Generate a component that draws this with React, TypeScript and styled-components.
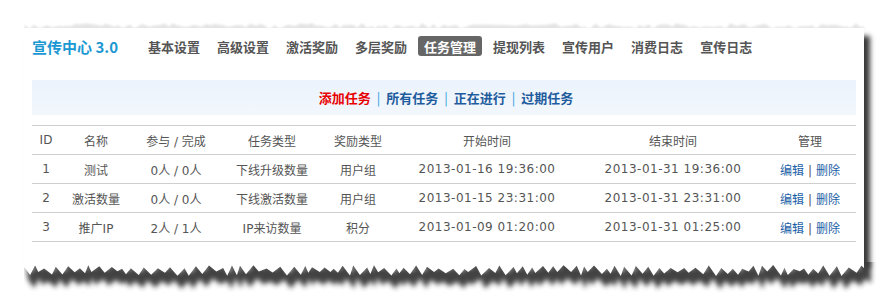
import React from "react";
import styled, { createGlobalStyle } from "styled-components";

const GlobalStyle = createGlobalStyle`
  html, body {
    margin: 0;
    padding: 0;
    background: #fff;
  }
  body {
    font-family: "DejaVu Sans", "Noto Sans CJK SC", sans-serif;
    color: #555;
  }
`;

const Page = styled.div`
  width: 882px;
  height: 302px;
  overflow: hidden;
  padding: 22px 0 0 24px;
  box-sizing: border-box;
`;

const Sheet = styled.div`
  width: 840px;
  box-sizing: border-box;
  padding: 6px 8px 20px;
  background: #fff;
  box-shadow: 6px 6px 5px rgba(0, 0, 0, 0.78);
`;

const Header = styled.div`
  display: flex;
  align-items: center;
  height: 20px;
`;

const Brand = styled.div`
  font-family: "Noto Sans CJK SC", sans-serif;
  font-size: 15px;
  font-weight: 700;
  color: #1b98d3;
  width: 110px;
  white-space: nowrap;
`;

const Nav = styled.div`
  display: flex;
  gap: 5px;
`;

const NavItem = styled.a<{ $active?: boolean }>`
  display: flex;
  align-items: center;
  height: 20px;
  padding: 0 6px;
  border-radius: 3px;
  font-family: "Noto Sans CJK SC", sans-serif;
  font-size: 13px;
  font-weight: 700;
  color: ${(p) => (p.$active ? "#fff" : "#555")};
  background: ${(p) => (p.$active ? "#666" : "transparent")};
  text-decoration: none;
  white-space: nowrap;
`;

const SubNav = styled.div`
  margin-top: 24px;
  height: 35px;
  display: flex;
  align-items: center;
  justify-content: center;
  padding-left: 4px;
  background: linear-gradient(#ebf3fc, #f2f7fc);
  font-family: "Noto Sans CJK SC", sans-serif;
  font-size: 13px;
  font-weight: 700;
`;

const SubLink = styled.a<{ $current?: boolean }>`
  color: ${(p) => (p.$current ? "#e80000" : "#1f5c9e")};
  text-decoration: none;
`;

const Sep = styled.span`
  color: #2a9be0;
  font-weight: 400;
  margin: 0 6px;
`;

const Table = styled.table`
  margin-top: 10px;
  width: 100%;
  border-collapse: collapse;
  table-layout: fixed;
  border-top: 1px solid #cfcfcf;
  font-size: 12px;
`;

const Th = styled.th`
  height: 28px;
  padding: 0;
  font-weight: 400;
  color: #555;
  text-align: center;
  border-bottom: 1px solid #cfcfcf;
`;

const Td = styled.td`
  height: 28px;
  padding: 0;
  color: #555;
  text-align: center;
  border-bottom: 1px solid #cfcfcf;
  white-space: nowrap;
`;

const Num = styled.span`
  letter-spacing: 0.5px;
`;

const ActionLink = styled.a`
  color: #1d5fa8;
  text-decoration: none;
`;

const ActionSep = styled.span`
  color: #555;
  margin: 0 4px;
`;

const EdgeSvg = styled.svg`
  display: block;
`;

const navItems = [
  "基本设置",
  "高级设置",
  "激活奖励",
  "多层奖励",
  "任务管理",
  "提现列表",
  "宣传用户",
  "消费日志",
  "宣传日志",
];

const subLinks = ["添加任务", "所有任务", "正在进行", "过期任务"];

const columns = [
  { title: "ID", width: 28 },
  { title: "名称", width: 72 },
  { title: "参与 / 完成", width: 88 },
  { title: "任务类型", width: 104 },
  { title: "奖励类型", width: 68 },
  { title: "开始时间", width: 190 },
  { title: "结束时间", width: 182 },
  { title: "管理", width: 92 },
];

const tasks = [
  { id: 1, name: "测试", count: "0人 / 0人", type: "下线升级数量", reward: "用户组", start: "2013-01-16 19:36:00", end: "2013-01-31 19:36:00" },
  { id: 2, name: "激活数量", count: "0人 / 0人", type: "下线激活数量", reward: "用户组", start: "2013-01-15 23:31:00", end: "2013-01-31 23:31:00" },
  { id: 3, name: "推广IP", count: "2人 / 1人", type: "IP来访数量", reward: "积分", start: "2013-01-09 01:20:00", end: "2013-01-31 01:25:00" },
];

// jagged line for the torn paper edge
const jagged = (seed: number, width: number, lo: number, hi: number) => {
  let s = seed;
  const rnd = () => {
    s = (s * 9301 + 49297) % 233280;
    return s / 233280;
  };
  const pts: [number, number][] = [];
  let x = 0;
  let up = true;
  while (x < width) {
    const y = up ? lo + rnd() * 4 : hi - rnd() * 5;
    pts.push([x, y]);
    x += 3 + rnd() * 5;
    up = !up;
  }
  pts.push([width, lo + 3]);
  return pts;
};

const TopEdge = () => {
  const pts = jagged(7, 840, 1, 7);
  const line = pts.map(([x, y]) => `${x},${y}`).join(" ");
  return (
    <EdgeSvg width={858} height={8}>
      <defs>
        <filter id="tb" x="-5%" y="-100%" width="110%" height="300%">
          <feGaussianBlur stdDeviation="1.2" />
        </filter>
      </defs>
      <polygon points={`${line} 840,8 0,8`} fill="#000" opacity={0.1} filter="url(#tb)" />
      <rect x={0} y={6} width={840} height={2} fill="#fff" />
    </EdgeSvg>
  );
};

const BottomEdge = () => {
  const pts = jagged(31, 840, 3, 14);
  const top = pts.map(([x, y]) => `${x + 2},${y - 3}`).join(" ");
  const bottom = [...pts]
    .reverse()
    .map(([x, y]) => `${x + 4},${y + 13}`)
    .join(" ");
  const paper = [...pts]
    .reverse()
    .map(([x, y]) => `${x},${y}`)
    .join(" ");
  const last = pts[pts.length - 1][1];
  return (
    <EdgeSvg width={858} height={34}>
      <defs>
        <filter id="bb" x="-5%" y="-50%" width="110%" height="200%">
          <feGaussianBlur stdDeviation="2.6" />
        </filter>
      </defs>
      <polygon
        points={`836,-10 847,-10 847,${last + 15} ${bottom} ${top}`}
        fill="#383838"
        opacity={0.95}
        filter="url(#bb)"
      />
      <polygon points={`-2,-2 840,-2 840,${last} ${paper}`} fill="#fff" />
    </EdgeSvg>
  );
};

export default function App() {
  return (
    <Page>
      <GlobalStyle />
      <TopEdge />
      <Sheet>
        <Header>
          <Brand>宣传中心 3.0</Brand>
          <Nav>
            {navItems.map((item) => (
              <NavItem key={item} $active={item === "任务管理"}>
                {item}
              </NavItem>
            ))}
          </Nav>
        </Header>

        <SubNav>
          {subLinks.map((link, i) => (
            <React.Fragment key={link}>
              {i > 0 && <Sep>|</Sep>}
              <SubLink $current={i === 0}>{link}</SubLink>
            </React.Fragment>
          ))}
        </SubNav>

        <Table>
          <colgroup>
            {columns.map((c) => (
              <col key={c.title} style={{ width: c.width }} />
            ))}
          </colgroup>
          <thead>
            <tr>
              {columns.map((c) => (
                <Th key={c.title}>{c.title}</Th>
              ))}
            </tr>
          </thead>
          <tbody>
            {tasks.map((t) => (
              <tr key={t.id}>
                <Td>{t.id}</Td>
                <Td>{t.name}</Td>
                <Td>{t.count}</Td>
                <Td>{t.type}</Td>
                <Td>{t.reward}</Td>
                <Td>
                  <Num>{t.start}</Num>
                </Td>
                <Td>
                  <Num>{t.end}</Num>
                </Td>
                <Td>
                  <ActionLink>编辑</ActionLink>
                  <ActionSep>|</ActionSep>
                  <ActionLink>删除</ActionLink>
                </Td>
              </tr>
            ))}
          </tbody>
        </Table>
      </Sheet>
      <BottomEdge />
    </Page>
  );
}
